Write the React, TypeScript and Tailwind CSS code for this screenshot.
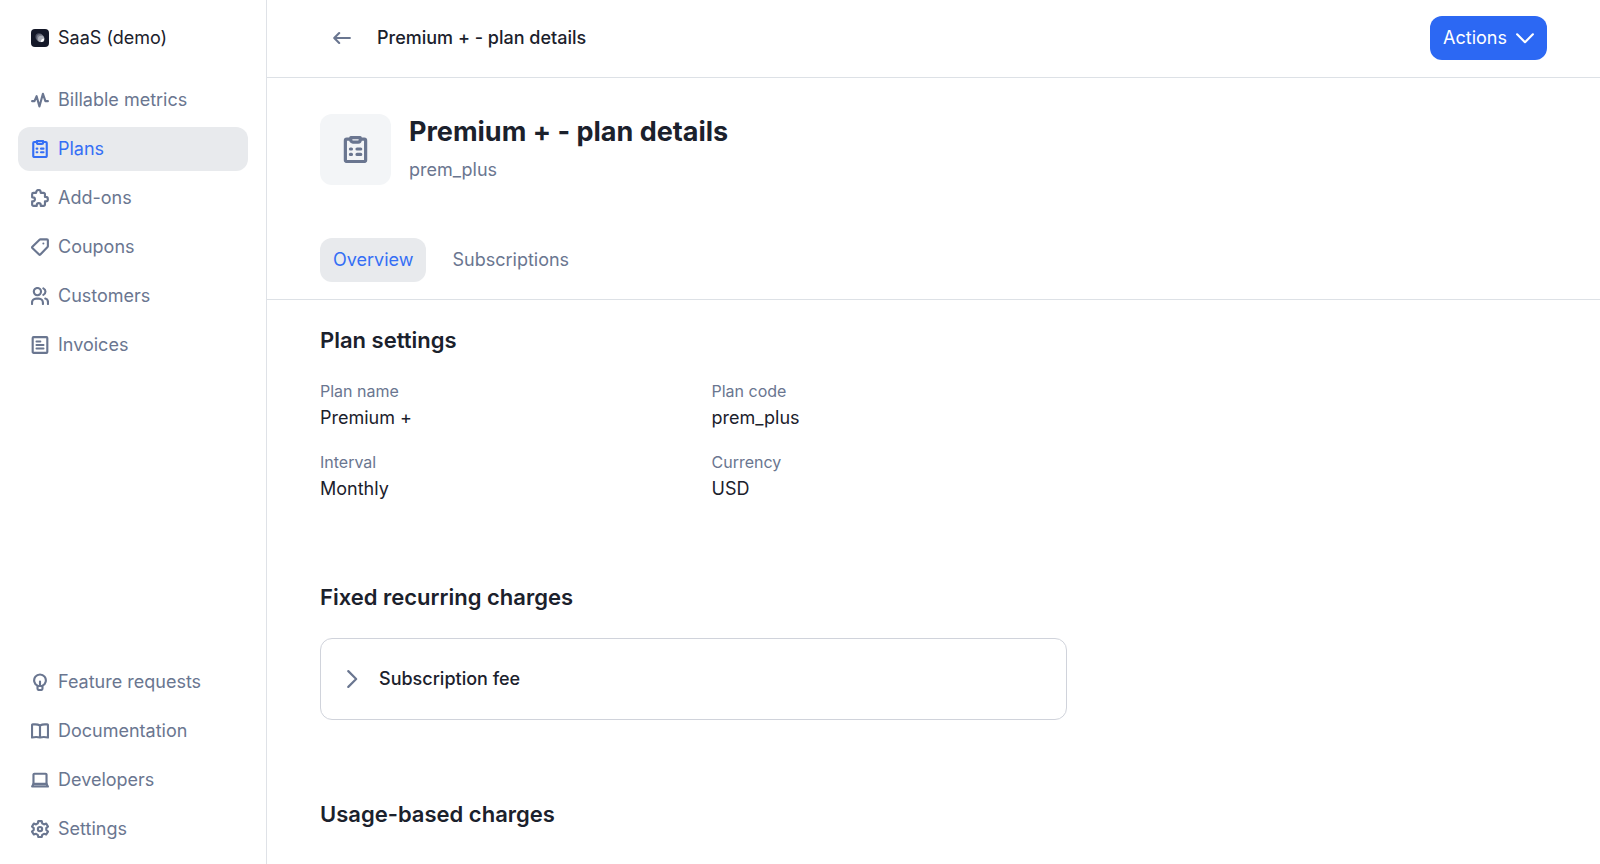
import { useState } from 'react';
import type { ReactNode } from 'react';

interface IconProps {
  className?: string;
}

interface NavEntry {
  label: string;
  icon: (props: IconProps) => ReactNode;
}

interface SvgProps extends IconProps {
  children: ReactNode;
}

function Svg({ className = 'size-[18px]', children }: SvgProps) {
  return (
    <svg
      className={`shrink-0 ${className}`}
      viewBox="0 0 16 16"
      fill="none"
      stroke="currentColor"
      strokeWidth="1.9"
      strokeLinecap="round"
      strokeLinejoin="round"
      aria-hidden="true"
    >
      {children}
    </svg>
  );
}

function PulseIcon({ className }: IconProps) {
  return (
    <Svg className={className}>
      <path d="M1 9h2.1l1.9-4.4 2.500 9.200 3.100-11.300 2.200 6.500H15" />
    </Svg>
  );
}

function PlanIcon({ className }: IconProps) {
  return (
    <Svg className={className}>
      <path d="M5 1.800H2.800a.8.8 0 0 0-.8.800v11.700a.8.8 0 0 0 .8.800h10.400a.8.8 0 0 0 .8-.8V2.600a.8.8 0 0 0-.8-.8H11" />
      <path d="M5.200 1h5.600v1.400a1.200 1.200 0 0 1-1.200 1.200H6.400a1.200 1.200 0 0 1-1.200-1.200z" />
      <path d="M5 7.700h.6M8.900 7.700h2.200M5 10.900h.6M8.900 10.900h2.200" />
    </Svg>
  );
}

function PuzzleIcon({ className }: IconProps) {
  return (
    <Svg className={className}>
      <path d="M4.600 3.400v-.5a2 2 0 0 1 4 0v.5h2.600a1.200 1.200 0 0 1 1.200 1.200V7h.6a2 2 0 0 1 0 4h-.6v2.800a1.200 1.200 0 0 1-1.200 1.200H8.700v-.6a1.800 1.800 0 0 0-3.600 0v.6H2.200A1.200 1.200 0 0 1 1 13.800V11h.7a1.800 1.800 0 0 0 0-3.600H1V4.600a1.200 1.200 0 0 1 1.200-1.200z" />
    </Svg>
  );
}

function CouponIcon({ className }: IconProps) {
  return (
    <Svg className={className}>
      <path d="M8.300 1.200h5.900a.8.8 0 0 1 .8.800v5.300a1 1 0 0 1-.3.700l-6.400 6.700a.8.8 0 0 1-1.100 0L1.200 8.900a.8.8 0 0 1 0-1.100l6.400-6.300a1 1 0 0 1 .7-.3z" />
      <circle cx="11" cy="4.9" r=".9" fill="currentColor" stroke="none" />
    </Svg>
  );
}

function CustomersIcon({ className }: IconProps) {
  return (
    <Svg className={className}>
      <circle cx="5.7" cy="4.1" r="3.2" />
      <path d="M11 1.200a3.200 3.200 0 0 1 0 5.800" />
      <path d="M.9 15.100v-1.200a3.600 3.600 0 0 1 3.600-3.600h2.500a3.600 3.600 0 0 1 3.600 3.600v1.200" />
      <path d="M12.700 10.300a3.200 3.200 0 0 1 2.400 3.200v1.600" />
    </Svg>
  );
}

function InvoiceIcon({ className }: IconProps) {
  return (
    <Svg className={className}>
      <rect x="1.5" y="1" width="13" height="14" rx=".8" />
      <path d="M4.800 4.900h3.600M4.800 8h6.400M4.800 11.100h6.400" strokeWidth="1.6" />
    </Svg>
  );
}

function BulbIcon({ className }: IconProps) {
  return (
    <Svg className={className}>
      <path d="M5.800 11.200a5.200 5.200 0 1 1 4.400 0v2.500a1.400 1.400 0 0 1-1.400 1.400H7.200a1.400 1.400 0 0 1-1.400-1.400z" />
      <path d="M8 7.600v3.600M5.800 11.600h4.400" />
    </Svg>
  );
}

function BookIcon({ className }: IconProps) {
  return (
    <Svg className={className}>
      <path d="M8 3.100c-1.300-.7-2.700-1-4.200-1H1.600a.7.7 0 0 0-.7.700v11c2.700-.6 4.900-.6 7.100 0 2.200-.6 4.400-.6 7.100 0v-11a.7.7 0 0 0-.7-.7h-2.200c-1.500 0-2.900.3-4.200 1zM8 3.100v10.700" />
    </Svg>
  );
}

function LaptopIcon({ className }: IconProps) {
  return (
    <Svg className={className}>
      <path d="M2.200 11.500V3.200a.8.8 0 0 1 .8-.8h10a.8.8 0 0 1 .8.800v8.300" />
      <path d="M2.200 11.500h11.600l1.200 2.300H1z" fill="currentColor" fillOpacity=".4" />
    </Svg>
  );
}

function GearIcon({ className }: IconProps) {
  return (
    <Svg className={className}>
      <path d="M6.500 1h3l.5 2 1.500.9 2-.7 1.600 2.600-1.500 1.400v1.700l1.500 1.400-1.600 2.600-2-.6-1.500.9-.5 1.900h-3L6 13.200l-1.500-.9-2 .6L.9 10.300l1.500-1.400V7.200L.9 5.800l1.600-2.600 2 .7L6 3z" />
      <circle cx="8" cy="8.1" r="1.9" />
    </Svg>
  );
}

function ArrowLeftIcon({ className }: IconProps) {
  return (
    <Svg className={className}>
      <path d="M15 8H1.100M5.500 3.600L1.100 8l4.400 4.400" />
    </Svg>
  );
}

function ChevronRightIcon({ className }: IconProps) {
  return (
    <Svg className={className}>
      <path d="M4.700 1l7 7-7 7" />
    </Svg>
  );
}

function ChevronDownIcon({ className }: IconProps) {
  return (
    <Svg className={className}>
      <path d="M1 4.700l7 7 7-7" />
    </Svg>
  );
}

function OrgLogo() {
  return (
    <svg className="size-[18px] shrink-0" viewBox="0 0 18 18" aria-hidden="true">
      <rect width="18" height="18" rx="4" fill="#141828" />
      <circle cx="8" cy="7.8" r="3.6" fill="#4a4f60" />
      <circle cx="9.2" cy="8.9" r="3.6" fill="#777b88" />
      <circle cx="10.2" cy="9.9" r="3.2" fill="#a9acb6" />
      <path d="M13.200 9.600a3.500 3.500 0 0 1-3.400 3.600c-.2-2.100 1.300-3.600 3.400-3.600z" fill="#fff" />
    </svg>
  );
}

const mainNav: NavEntry[] = [
  { label: 'Billable metrics', icon: PulseIcon },
  { label: 'Plans', icon: PlanIcon },
  { label: 'Add-ons', icon: PuzzleIcon },
  { label: 'Coupons', icon: CouponIcon },
  { label: 'Customers', icon: CustomersIcon },
  { label: 'Invoices', icon: InvoiceIcon },
];

const bottomNav: NavEntry[] = [
  { label: 'Feature requests', icon: BulbIcon },
  { label: 'Documentation', icon: BookIcon },
  { label: 'Developers', icon: LaptopIcon },
  { label: 'Settings', icon: GearIcon },
];

const planSettings = [
  { label: 'Plan name', value: 'Premium +' },
  { label: 'Plan code', value: 'prem_plus' },
  { label: 'Interval', value: 'Monthly' },
  { label: 'Currency', value: 'USD' },
];

const tabs = ['Overview', 'Subscriptions'];

interface NavListProps {
  items: NavEntry[];
  active: string;
  onSelect: (label: string) => void;
}

function NavList({ items, active, onSelect }: NavListProps) {
  return (
    <ul className="flex flex-col gap-[5px]">
      {items.map(({ label, icon: Icon }) => (
        <li key={label}>
          <a
            href="#"
            onClick={() => onSelect(label)}
            className={`flex h-11 items-center gap-[9px] rounded-xl px-[13px] ${
              active === label
                ? 'bg-[#e8eaed] text-[#356ff5]'
                : 'text-[#6a7690] hover:bg-gray-100'
            }`}
          >
            <Icon />
            {label}
          </a>
        </li>
      ))}
    </ul>
  );
}

export default function App() {
  const [activeNav, setActiveNav] = useState('Plans');
  const [activeTab, setActiveTab] = useState('Overview');
  const [isFeeOpen, setIsFeeOpen] = useState(false);

  return (
    <div className="flex h-screen bg-white font-['Inter',sans-serif] text-lg leading-7 text-[#1b212c]">
      {/* SIDEBAR */}
      <aside className="flex w-[267px] shrink-0 flex-col border-r border-[#dfe2e7] px-[18px] pt-4 pb-[13px]">
        <button className="mb-[18px] flex h-11 items-center gap-[9px] rounded-xl px-[13px]">
          <OrgLogo />
          SaaS (demo)
        </button>

        <nav className="flex flex-1 flex-col justify-between">
          <NavList items={mainNav} active={activeNav} onSelect={setActiveNav} />
          <NavList items={bottomNav} active={activeNav} onSelect={setActiveNav} />
        </nav>
      </aside>

      <main className="min-w-0 flex-1 overflow-y-auto">
        {/* TOP BAR */}
        <header className="flex h-[78px] items-center justify-between border-b border-[#dde1e6] px-[53px] pb-[2px]">
          <div className="flex items-center gap-[13px]">
            <button aria-label="Back" className="flex size-11 items-center justify-center rounded-xl text-[#6a7690]">
              <ArrowLeftIcon />
            </button>
            <span className="font-medium">Premium + - plan details</span>
          </div>

          <button className="flex h-11 items-center gap-[9px] rounded-xl bg-[#2c68f3] px-[13px] text-white">
            Actions
            <ChevronDownIcon />
          </button>
        </header>

        {/* PLAN HEADING */}
        <section className="border-b border-[#dde1e6] px-[53px] pt-9 pb-[17px]">
          <div className="flex items-center gap-[18px]">
            <div className="flex size-[71px] items-center justify-center rounded-xl bg-[#f3f5f7] text-[#6a7690]">
              <PlanIcon className="size-[27px]" />
            </div>
            <div>
              <h1 className="text-[27px] leading-8 font-bold">Premium + - plan details</h1>
              <p className="pt-2 text-[#6a7690]">prem_plus</p>
            </div>
          </div>

          <div role="tablist" className="mt-[53px] flex gap-[13px]">
            {tabs.map((tab) => (
              <button
                key={tab}
                role="tab"
                aria-selected={activeTab === tab}
                onClick={() => setActiveTab(tab)}
                className={`h-11 rounded-xl px-[13px] ${
                  activeTab === tab ? 'bg-[#e8eaed] text-[#356ff5]' : 'text-[#6a7690]'
                }`}
              >
                {tab}
              </button>
            ))}
          </div>
        </section>

        {/* PLAN CONTENT */}
        <div className="flex max-w-[853px] flex-col gap-[78px] px-[53px] pt-6">
          <section>
            <h2 className="text-[22px] leading-8 font-semibold">Plan settings</h2>
            <dl className="mt-[23px] grid grid-cols-2 gap-x-9 gap-y-[18px]">
              {planSettings.map((item) => (
                <div key={item.label} className="flex flex-col gap-px">
                  <dt className="text-base leading-6 text-[#6a7690]">{item.label}</dt>
                  <dd>{item.value}</dd>
                </div>
              ))}
            </dl>
          </section>

          <section>
            <h2 className="text-[22px] leading-8 font-semibold">Fixed recurring charges</h2>
            <button
              aria-expanded={isFeeOpen}
              onClick={() => setIsFeeOpen(!isFeeOpen)}
              className="mt-[25px] flex h-[82px] w-full items-center gap-[18px] rounded-xl border border-[#d0d3db] px-[22px] font-medium"
            >
              <ChevronRightIcon className="size-[18px] text-[#6a7690]" />
              Subscription fee
            </button>
          </section>

          <section>
            <h2 className="text-[22px] leading-8 font-semibold">Usage-based charges</h2>
          </section>
        </div>
      </main>
    </div>
  );
}
